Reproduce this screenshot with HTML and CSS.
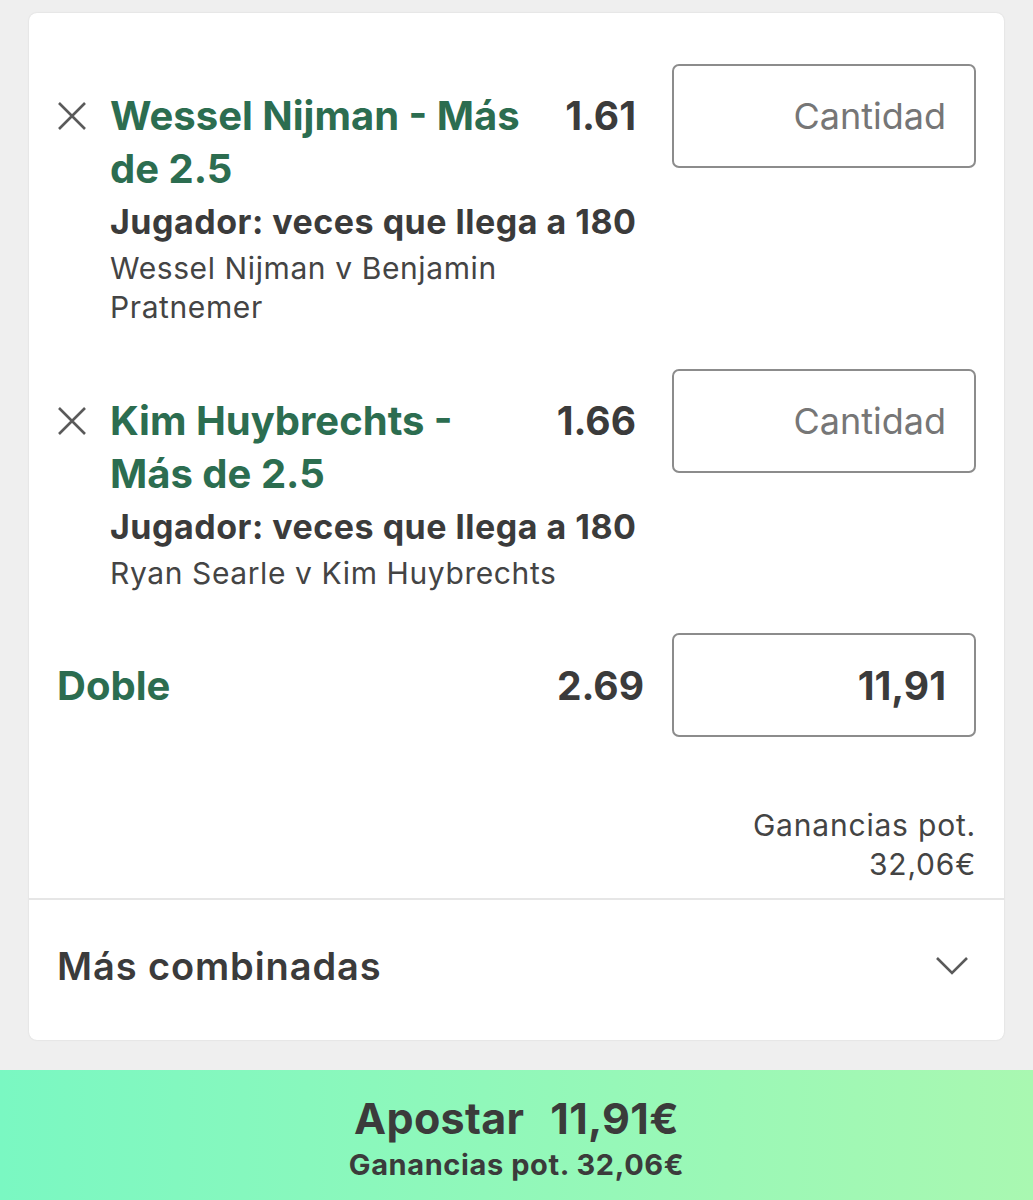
FILE: index.html
```html
<!DOCTYPE html>
<html lang="es">
<head>
    <meta charset="UTF-8">
    <meta name="viewport" content="width=device-width, initial-scale=1.0">
    <title>Boleto</title>
    <link rel="stylesheet" href="styles.css">
</head>
<body>

<div class="slip">
    <div class="slip-main">
        <div class="pick">
            <button class="remove" aria-label="Quitar">
                <svg width="30" height="30" viewBox="0 0 30 30"><path d="M2 2L28 28M28 2L2 28" stroke="#5a5a5a" stroke-width="2.6" fill="none"/></svg>
            </button>
            <div class="pick-info">
                <div class="pick-head">
                    <div class="pick-title">Wessel Nijman - Más de 2.5</div>
                    <div class="odds">1.61</div>
                </div>
                <div class="market">Jugador: veces que llega a 180</div>
                <div class="event">Wessel Nijman v Benjamin Pratnemer</div>
            </div>
            <div class="stake placeholder">Cantidad</div>
        </div>

        <div class="pick">
            <button class="remove" aria-label="Quitar">
                <svg width="30" height="30" viewBox="0 0 30 30"><path d="M2 2L28 28M28 2L2 28" stroke="#5a5a5a" stroke-width="2.6" fill="none"/></svg>
            </button>
            <div class="pick-info">
                <div class="pick-head">
                    <div class="pick-title">Kim Huybrechts - Más de 2.5</div>
                    <div class="odds">1.66</div>
                </div>
                <div class="market">Jugador: veces que llega a 180</div>
                <div class="event">Ryan Searle v Kim Huybrechts</div>
            </div>
            <div class="stake placeholder">Cantidad</div>
        </div>

        <div class="combo">
            <div class="combo-name">Doble</div>
            <div class="odds combo-odds">2.69</div>
            <div class="stake filled">11,91</div>
        </div>

        <div class="returns">Ganancias pot.<br>32,06€</div>
    </div>

    <div class="more">
        <span>Más combinadas</span>
        <svg width="34" height="20" viewBox="0 0 34 20"><path d="M2 2L17 17L32 2" stroke="#5a5a5a" stroke-width="2.6" fill="none"/></svg>
    </div>
</div>

<div class="place-bet">
    <div class="place-amount"><span>Apostar</span><span>11,91€</span></div>
    <div class="place-returns">Ganancias pot. 32,06€</div>
</div>

</body>
</html>
```

FILE: styles.css
```css
body {
    margin: 0;
    background: #efefef;
    font-family: 'Inter', 'Roboto', sans-serif;
    color: #3b3b3b;
}
.slip {
    margin: 13px 29px 0;
    background: #fff;
    border-radius: 8px;
    box-shadow: 0 0 2px rgba(0, 0, 0, 0.12);
}
.slip-main {
    padding: 51px 28px 14px;
}
.pick {
    display: flex;
    align-items: flex-start;
    margin-bottom: 42px;
}
.pick + .pick {
    margin-bottom: 40px;
}
.remove {
    width: 53px;
    padding: 0;
    margin-top: 37px;
    border: none;
    background: none;
    text-align: left;
}
.remove svg {
    display: block;
}
.pick-info {
    width: 526px;
    padding-top: 25px;
}
.pick-head {
    display: flex;
    justify-content: space-between;
    gap: 40px;
}
.pick-title {
    font-size: 40px;
    font-weight: 700;
    line-height: 53px;
    color: #2c6d50;
}
.odds {
    font-size: 39px;
    font-weight: 700;
    line-height: 53px;
    white-space: nowrap;
}
.market {
    font-size: 34px;
    font-weight: 700;
    line-height: 54px;
    letter-spacing: 0.5px;
    white-space: nowrap;
}
.event {
    font-size: 30px;
    line-height: 39px;
    letter-spacing: 0.6px;
    color: #444;
}
.stake {
    box-sizing: border-box;
    width: 304px;
    height: 104px;
    margin-left: auto;
    border: 2px solid #8c8c8c;
    border-radius: 7px;
    padding: 0 28px;
    display: flex;
    align-items: center;
    justify-content: flex-end;
    font-size: 36px;
}
.placeholder {
    color: #767676;
}
.filled {
    font-size: 39px;
    font-weight: 700;
}
.combo {
    display: flex;
    align-items: center;
}
.combo-name {
    flex: 1;
    font-size: 40px;
    font-weight: 700;
    color: #2c6d50;
}
.combo-odds {
    margin-right: 28px;
}
.combo .stake {
    margin-left: 0;
}
.returns {
    margin-top: 69px;
    text-align: right;
    font-size: 30px;
    line-height: 39px;
    letter-spacing: 0.8px;
    color: #444;
}
.more {
    border-top: 2px solid #e6e6e6;
    height: 142px;
    box-sizing: border-box;
    padding: 0 35px 8px 28px;
    display: flex;
    align-items: center;
    justify-content: space-between;
    font-size: 38px;
    font-weight: 600;
    letter-spacing: 0.9px;
}
.more svg {
    display: block;
}
.place-bet {
    margin-top: 30px;
    height: 130px;
    background: linear-gradient(90deg, #7af8c2, #a9f8b1);
    box-sizing: border-box;
    padding-top: 24px;
    display: flex;
    flex-direction: column;
    align-items: center;
}
.place-amount {
    display: flex;
    gap: 26px;
    font-size: 43px;
    font-weight: 700;
    line-height: 48px;
    letter-spacing: 0.3px;
}
.place-returns {
    font-size: 29px;
    font-weight: 700;
    line-height: 46px;
    letter-spacing: 0.6px;
}
```
